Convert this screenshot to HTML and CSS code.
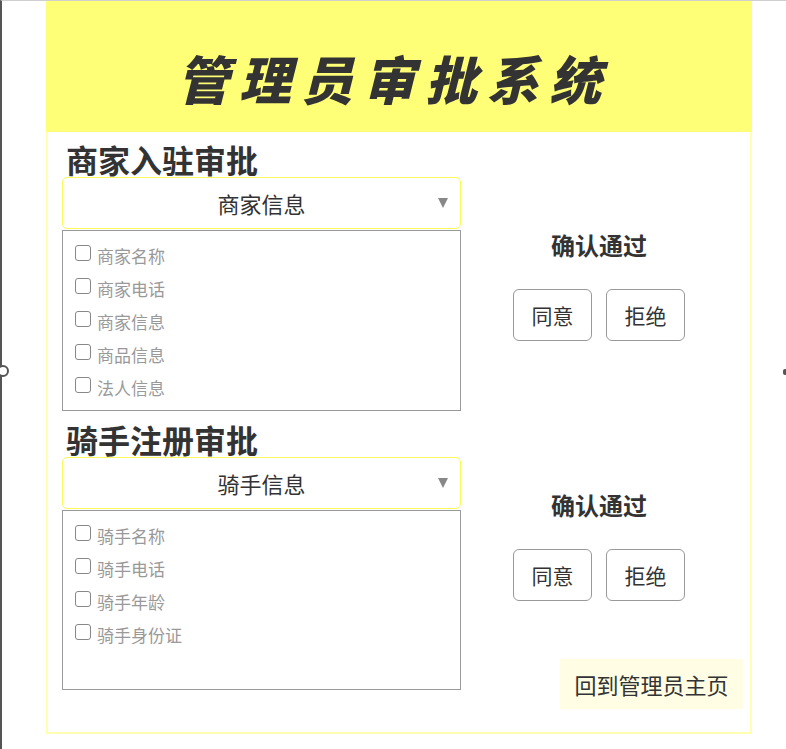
FILE: index.html
```html
<!DOCTYPE html>
<html lang="zh">
<head>
<meta charset="utf-8">
<title>管理员审批系统</title>
<link rel="stylesheet" href="styles.css">
</head>
<body>
<div class="frame">
  <span class="handle-left"></span>
  <span class="handle-right"></span>
  <div class="app">
    <header class="header">
      <h1 class="title">管理员审批系统</h1>
    </header>
    <main class="main">
      <section class="section section-merchant">
        <div class="left">
          <h2 class="heading">商家入驻审批</h2>
          <div class="select">
            <span class="select-text">商家信息</span>
            <svg class="arrow" width="10" height="10" viewBox="0 0 10 10"><polygon points="0,0 10,0 5,10" fill="#888"/></svg>
          </div>
          <div class="list">
            <label class="item"><span class="box"></span><span class="label">商家名称</span></label>
            <label class="item"><span class="box"></span><span class="label">商家电话</span></label>
            <label class="item"><span class="box"></span><span class="label">商家信息</span></label>
            <label class="item"><span class="box"></span><span class="label">商品信息</span></label>
            <label class="item"><span class="box"></span><span class="label">法人信息</span></label>
          </div>
        </div>
        <div class="right">
          <div class="confirm">
            <h3 class="confirm-title">确认通过</h3>
            <div class="buttons">
              <button class="btn">同意</button>
              <button class="btn">拒绝</button>
            </div>
          </div>
        </div>
      </section>
      <section class="section section-rider">
        <div class="left">
          <h2 class="heading">骑手注册审批</h2>
          <div class="select">
            <span class="select-text">骑手信息</span>
            <svg class="arrow" width="10" height="10" viewBox="0 0 10 10"><polygon points="0,0 10,0 5,10" fill="#888"/></svg>
          </div>
          <div class="list list-short">
            <label class="item"><span class="box"></span><span class="label">骑手名称</span></label>
            <label class="item"><span class="box"></span><span class="label">骑手电话</span></label>
            <label class="item"><span class="box"></span><span class="label">骑手年龄</span></label>
            <label class="item"><span class="box"></span><span class="label">骑手身份证</span></label>
          </div>
        </div>
        <div class="right">
          <div class="confirm">
            <h3 class="confirm-title">确认通过</h3>
            <div class="buttons">
              <button class="btn">同意</button>
              <button class="btn">拒绝</button>
            </div>
          </div>
          <button class="home">回到管理员主页</button>
        </div>
      </section>
    </main>
  </div>
</div>
</body>
</html>
```
FILE: styles.css
```css
* { box-sizing: border-box; }
html, body { margin: 0; padding: 0; background: #fff; }
body {
  font-family: "Noto Sans CJK SC", "Noto Sans", sans-serif;
  color: #333;
}
.frame {
  position: relative;
  min-height: 749px;
  border-top: 1px solid #cfcfcf;
  border-left: 2px solid #555;
  padding-left: 44px;
}
.handle-left {
  position: absolute;
  left: -5px;
  top: 364px;
  width: 12px;
  height: 12px;
  border: 2px solid #555;
  border-radius: 50%;
  background: #fff;
}
.handle-right {
  position: absolute;
  right: 0;
  top: 368px;
  width: 3px;
  height: 6px;
  background: #555;
  border-radius: 2px 0 0 2px;
}
.app { width: 706px; }
.header {
  height: 131px;
  background: #ffff77;
  padding-top: 51px;
  padding-right: 10px;
  text-align: center;
}
.title {
  margin: 0;
  font-size: 52px;
  line-height: 52px;
  font-weight: 900;
  font-style: italic;
  letter-spacing: 10px;
  color: #333;
}
.main {
  border: 2px solid #ffffb0;
  border-top: 0;
  padding: 10px 0 23px 14px;
}
.section { display: flex; }
.section-rider { margin-top: 11px; }
.left { width: 399px; flex: none; }
.heading {
  margin: 0;
  padding-left: 4px;
  font-size: 32px;
  line-height: 35px;
  font-weight: bold;
  color: #333;
}
.select {
  position: relative;
  height: 52px;
  border: 1px solid #fafa5a;
  border-radius: 5px;
  display: flex;
  align-items: center;
  justify-content: center;
}
.select-text {
  font-size: 22px;
  color: #333;
  line-height: 1;
}
.arrow {
  position: absolute;
  right: 12px;
  top: 20px;
}
.list {
  margin-top: 1px;
  height: 181px;
  border: 1px solid #999;
  padding: 14px 0 0 12px;
}
.list-short { height: 180px; }
.item {
  display: flex;
  align-items: flex-start;
  height: 20px;
  margin-bottom: 13px;
}
.box {
  width: 16px;
  height: 16px;
  border: 1.5px solid #888;
  border-radius: 3px;
  margin-right: 6px;
  background: #fff;
}
.label {
  font-size: 17px;
  line-height: 20px;
  margin-top: 1px;
  color: #999;
}
.right {
  flex: 1;
  display: flex;
  flex-direction: column;
}
.section-merchant .right { padding-top: 88px; }
.section-rider .right { padding-top: 68px; }
.confirm {
  padding-right: 13px;
  text-align: center;
}
.confirm-title {
  margin: 0;
  font-size: 24px;
  line-height: 30px;
  font-weight: bold;
  color: #333;
}
.buttons {
  margin-top: 29px;
  display: flex;
  justify-content: center;
  gap: 14px;
}
.btn {
  width: 79px;
  height: 52px;
  border: 1px solid #999;
  border-radius: 6px;
  background: #fff;
  font-family: inherit;
  font-size: 21px;
  color: #333;
  padding: 0;
}
.home {
  align-self: flex-end;
  margin-top: 58px;
  margin-right: 7px;
  width: 183px;
  height: 50px;
  border: 0;
  background: #fffde4;
  font-family: inherit;
  font-size: 22px;
  color: #333;
  padding: 0;
}
```
